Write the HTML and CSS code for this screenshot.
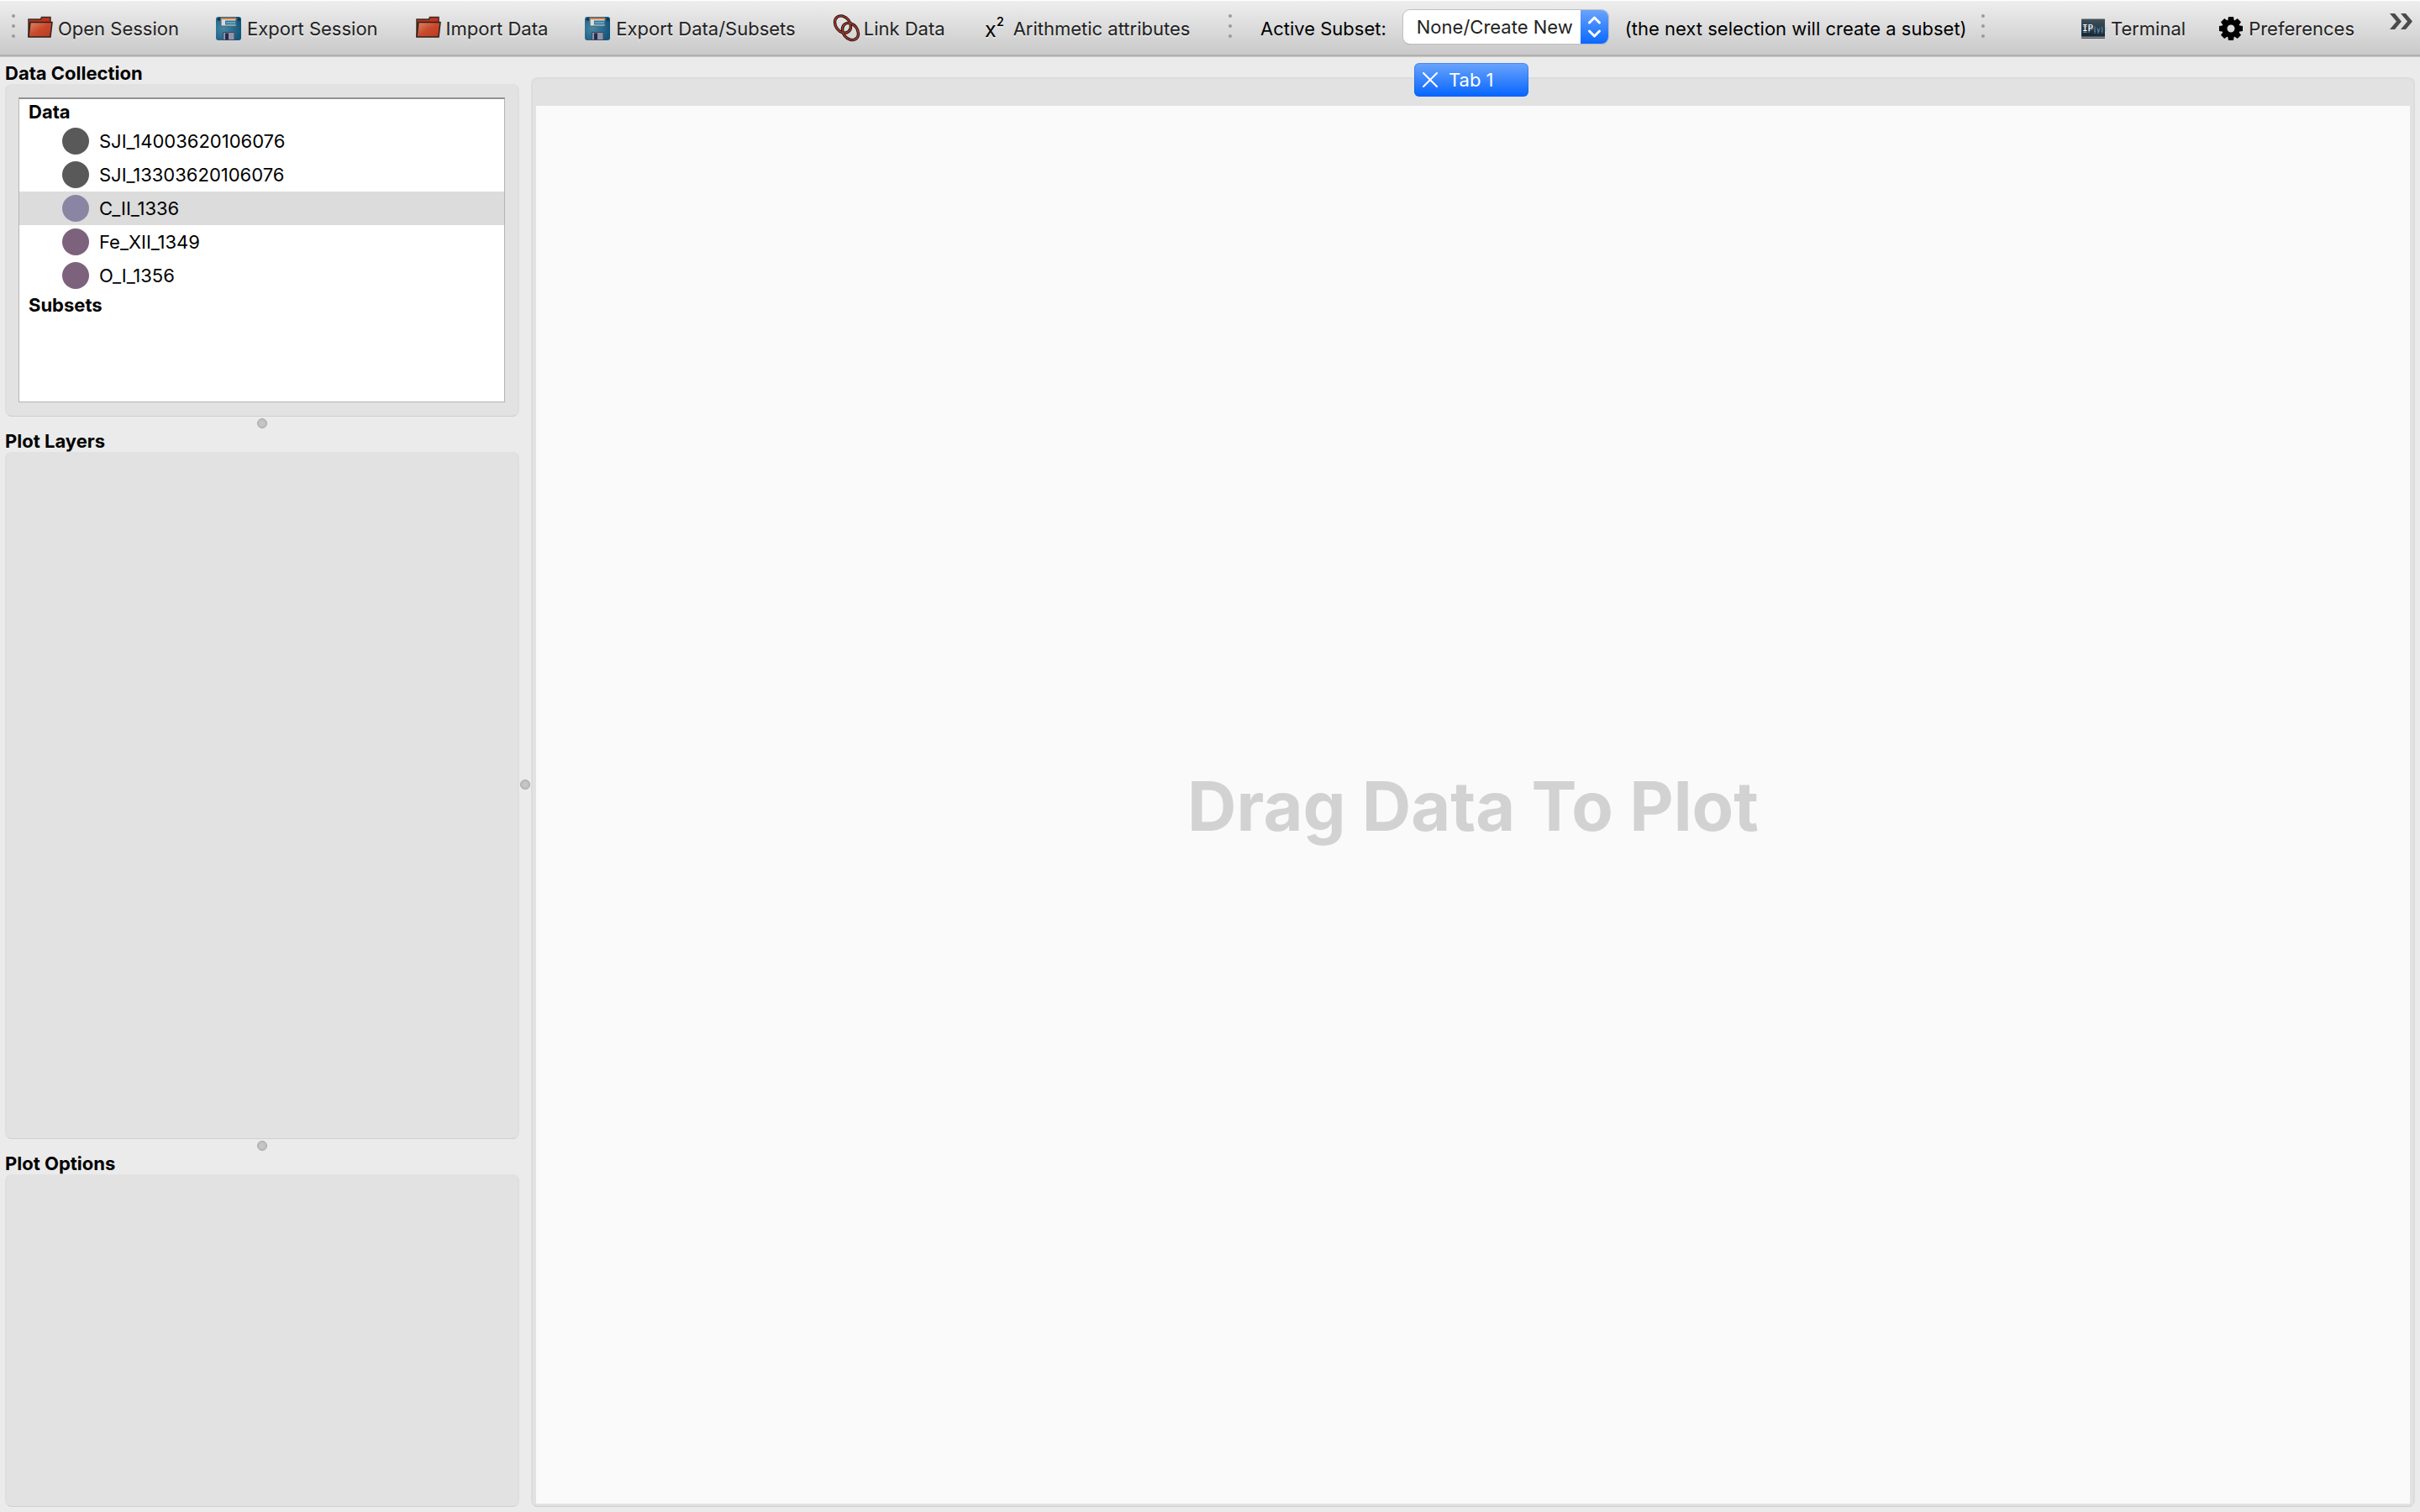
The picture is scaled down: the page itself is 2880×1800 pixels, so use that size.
FILE: index.html
```html
<!DOCTYPE html>
<html lang="en">
<head>
<meta charset="utf-8">
<title>Data Explorer</title>
<link rel="stylesheet" href="styles.css">
</head>
<body>
<svg class="defs" aria-hidden="true">
  <defs>
    <linearGradient id="red" x1="0" y1="0" x2="1" y2="1">
      <stop offset="0" stop-color="#dc8a64"/><stop offset=".5" stop-color="#c9492c"/><stop offset="1" stop-color="#b73a22"/>
    </linearGradient>
    <radialGradient id="blue" cx=".3" cy=".5" r=".7">
      <stop offset="0" stop-color="#4687a3"/><stop offset="1" stop-color="#14577c"/>
    </radialGradient>
    <linearGradient id="screen" x1="0" y1="0" x2="0" y2="1">
      <stop offset="0" stop-color="#43545c"/><stop offset="1" stop-color="#0a2233"/>
    </linearGradient>
    <symbol id="folder" viewBox="0 0 32 32">
      <path d="M2 28V7h14.500l1-2.500h10.500V11" fill="#c0341f" stroke="#3b2a24" stroke-width="1.500"/>
      <path d="M4 10.500h26l-2 17.500H2z" fill="url(#red)" stroke="#2c211d" stroke-width="1.500"/>
    </symbol>
    <symbol id="floppy" viewBox="0 0 32 32">
      <rect x="0" y="4" width="30" height="28" rx="3" fill="url(#blue)"/>
      <path d="M2 5.500h3v3H2zM26 5.500h3v3h-3z" fill="#14324a"/>
      <path d="M6 5h18v10H6z" fill="#d3dbe3" stroke="#54606f"/>
      <path d="M6 5h18v2H6z" fill="#cf7a36"/>
      <path d="M11 8.500h13v5H11z" fill="#2e7697"/>
      <path d="M12 11h11" stroke="#a9cbd8"/>
      <path d="M8.500 22.500h13.500v9H8.500z" fill="#8f95a6" stroke="#3f4864"/>
      <path d="M11 23.500h4v7.500h-4z" fill="#1f2b50"/>
    </symbol>
  </defs>
</svg>

<header class="toolbars">
  <div class="toolbar toolbar-data">
    <span class="handle"><i></i><i></i><i></i></span>
    <button class="tool"><svg class="icon"><use href="#folder"/></svg>Open Session</button>
    <button class="tool"><svg class="icon"><use href="#floppy"/></svg>Export Session</button>
    <button class="tool"><svg class="icon"><use href="#folder"/></svg>Import Data</button>
    <button class="tool"><svg class="icon"><use href="#floppy"/></svg>Export Data/Subsets</button>
    <button class="tool"><svg class="icon" viewBox="0 0 32 32" fill="none">
      <g stroke="#1c1412" stroke-width="3.400"><ellipse cx="12" cy="13" rx="8.500" ry="11" transform="rotate(-38 12 13)"/><ellipse cx="21" cy="21.500" rx="8.500" ry="11" transform="rotate(-38 21 21.500)"/></g>
      <g stroke="#b8392a" stroke-width="1.400"><ellipse cx="12" cy="13" rx="8.500" ry="11" transform="rotate(-38 12 13)"/><ellipse cx="21" cy="21.500" rx="8.500" ry="11" transform="rotate(-38 21 21.500)"/></g>
    </svg>Link Data</button>
    <button class="tool"><svg class="icon" viewBox="0 0 32 32"><text class="glyph-x" x="3" y="28">x</text><text class="glyph-2" x="17" y="15">2</text></svg>Arithmetic attributes</button>
  </div>
  <div class="toolbar toolbar-subset">
    <span class="handle"><i></i><i></i><i></i></span>
    <label class="subset-label" for="subset">Active Subset:</label>
    <span class="combo">
      <select id="subset"><option>None/Create New</option></select>
      <svg class="combo-arrows" viewBox="0 0 33 40" fill="none" stroke="#fff" stroke-width="3" stroke-linecap="round" stroke-linejoin="round"><path d="M10.500 15l6-6 6 6M10.500 25l6 6 6-6"/></svg>
    </span>
    <span class="subset-hint">(the next selection will create a subset)</span>
  </div>
  <div class="toolbar toolbar-app">
    <span class="handle"><i></i><i></i><i></i></span>
    <button class="tool tool-first"><svg class="icon" viewBox="0 0 32 32">
      <path d="M2 6h28v24H2z" fill="url(#screen)"/><path d="M2 6.500h28" stroke="#9a9a9a"/><path d="M2 28.500h28" stroke="#8d8a90" stroke-width="2"/>
      <text class="glyph-ip" x="3" y="21" fill="#fff">IP</text><text class="glyph-y" x="16" y="21" fill="#5a9fcb">[y]:</text>
    </svg>Terminal</button>
    <button class="tool"><svg class="icon" viewBox="0 0 32 32">
      <g fill="#000"><path d="M13 4h6l1 6h-8zM13 32h6l1-6h-8z"/><path d="M13 4h6l1 6h-8zM13 32h6l1-6h-8z" transform="rotate(45 16 18)"/><path d="M13 4h6l1 6h-8zM13 32h6l1-6h-8z" transform="rotate(90 16 18)"/><path d="M13 4h6l1 6h-8zM13 32h6l1-6h-8z" transform="rotate(135 16 18)"/></g>
      <circle cx="16" cy="18" r="7.500" fill="none" stroke="#000" stroke-width="6"/>
    </svg>Preferences</button>
    <button class="more" aria-label="More"><svg viewBox="0 0 28 20" fill="none"><path d="M0 0h6l8 9.500-8 9.500H0l8-9.500zM13 0h6l8 9.500-8 9.500h-6l8-9.500z" fill="#4a4a4a"/></svg></button>
  </div>
</header>

<main class="workspace">
  <aside class="sidebar">
    <h2 class="title">Data Collection</h2>
    <section class="panel panel-data">
      <div class="tree">
        <h3 class="group">Data</h3>
        <ul class="items">
          <li class="item"><i class="dot gray"></i>SJI_14003620106076</li>
          <li class="item"><i class="dot gray"></i>SJI_13303620106076</li>
          <li class="item selected"><i class="dot violet"></i>C_II_1336</li>
          <li class="item"><i class="dot plum"></i>Fe_XII_1349</li>
          <li class="item"><i class="dot plum"></i>O_I_1356</li>
        </ul>
        <h3 class="group">Subsets</h3>
      </div>
    </section>
    <div class="splitter" role="separator"><i class="grip"></i></div>
    <h2 class="title">Plot Layers</h2>
    <section class="panel panel-layers"></section>
    <div class="splitter" role="separator"><i class="grip"></i></div>
    <h2 class="title">Plot Options</h2>
    <section class="panel panel-options"></section>
  </aside>
  <div class="splitter splitter-vertical" role="separator"><i class="grip"></i></div>
  <section class="tabs">
    <div class="tabbar">
      <button class="tab"><svg class="close" viewBox="0 0 18 18" stroke="#fff" stroke-width="2" stroke-linecap="round"><path d="M1 1l16 16M17 1L1 17"/></svg>Tab 1</button>
    </div>
    <div class="frame">
      <div class="canvas"><p class="prompt">Drag Data To Plot</p></div>
    </div>
  </section>
</main>
</body>
</html>
```
FILE: styles.css
```css
* {
  box-sizing: border-box;
}

body {
  margin: 0;
  min-height: 100vh;
  display: flex;
  flex-direction: column;
  background: #ebebeb;
  color: #000;
  font: 22px/30px Inter, "Liberation Sans", sans-serif;
}

button,
select {
  margin: 0;
  padding: 0;
  border: 0;
  background: none;
  color: #232323;
  font: inherit;
}

h2,
h3,
p,
ul {
  margin: 0;
  padding: 0;
  list-style: none;
}

.defs {
  position: absolute;
  width: 0;
  height: 0;
}

/* Toolbars */
.toolbars {
  display: grid;
  grid-template-columns: 1448px 896px 1fr;
  height: 68px;
  border-top: 1px solid #fff;
  border-bottom: 1px solid #c8c8c8;
  background: linear-gradient(#eee, #c8c8c8);
}

.toolbar {
  display: flex;
  align-items: center;
  padding: 2px 0 0 14px;
  border-bottom: 2px solid #b0b0b0;
  white-space: nowrap;
}

.toolbar-data {
  gap: 44px;
}

.toolbar-data .handle {
  margin-right: -30px;
}

.handle {
  display: flex;
  flex-direction: column;
  gap: 8px;
  width: 4px;
  margin-bottom: 6px;
}

.handle i {
  width: 4px;
  height: 4px;
  border-radius: 2px;
  background: #9a9a9a;
}

.tool {
  display: flex;
  align-items: center;
  gap: 5px;
  text-shadow: 0 2px 0 rgba(255, 255, 255, 0.4);
}

.icon {
  width: 32px;
  height: 32px;
  margin-bottom: 4px;
  overflow: visible;
}

.glyph-x {
  font-size: 25px;
  line-height: 25px;
}

.glyph-2 {
  font-size: 14px;
  font-weight: 600;
}

.glyph-ip,
.glyph-y {
  font: 11px "DejaVu Sans Mono", monospace;
}

.glyph-y {
  font-size: 7px;
}

.subset-label {
  margin-left: 34px;
}

.combo {
  display: flex;
  flex: none;
  width: 244px;
  height: 40px;
  margin: 0 20px 4px 20px;
  overflow: hidden;
  border-radius: 8px;
  background: #fff;
  box-shadow: 0 0 0 1px #c0c0c0, 0 1px 1px #999;
}

.combo select {
  flex: 1;
  min-width: 0;
  padding-left: 16px;
  appearance: none;
}

.combo-arrows {
  width: 33px;
  height: 40px;
  background: linear-gradient(#6aa3fb, #0a68ff);
}

.toolbar-app {
  padding-right: 8px;
}

.tool-first {
  margin: 0 38px 0 auto;
}

.more {
  display: flex;
  width: 28px;
  height: 20px;
  margin: 0 0 16px 42px;
}

/* Workspace */
.workspace {
  flex: 1;
  display: grid;
  grid-template-columns: 612px 14px 1fr;
  padding: 4px 6px 6px;
}

.sidebar {
  display: flex;
  flex-direction: column;
}

.title {
  height: 28px;
  font-size: 22px;
  line-height: 30px;
  font-weight: 700;
}

.panel {
  border: 2px solid #dedede;
  border-top-width: 0;
  border-bottom: 1px solid #cfcfcf;
  border-radius: 8px;
  background: #e2e2e2;
}

.panel-data,
.panel-options {
  height: 396px;
}

.panel-data {
  padding: 16px 15px 16px 14px;
}

.panel-layers {
  flex: 1;
}

.tree {
  height: 100%;
  border: 1px solid #b4b4b4;
  border-top: 2px solid #929292;
  background: #fff;
}

.group {
  padding-left: 11px;
  font-size: 22px;
  line-height: 30px;
  font-weight: 700;
}

.item {
  display: flex;
  align-items: center;
  gap: 12px;
  height: 40px;
  padding-left: 51px;
  line-height: 32px;
}

.selected {
  background: #dcdcdc;
}

.dot {
  width: 32px;
  height: 32px;
  border-radius: 50%;
}

.gray {
  background: #595959;
}

.violet {
  background: #8a85a3;
}

.plum {
  background: #7c627c;
}

.splitter {
  display: flex;
  justify-content: center;
  align-items: center;
  height: 12px;
  margin-top: 2px;
}

.splitter-vertical {
  height: auto;
}

.grip {
  width: 12px;
  height: 12px;
  border: 1px solid #a8a8a8;
  border-radius: 50%;
  background: radial-gradient(#cacaca, #b8b8b8);
}

.tabs {
  display: flex;
  flex-direction: column;
  min-width: 0;
  padding-top: 20px;
}

.tabbar {
  display: flex;
  justify-content: center;
  height: 34px;
  padding-right: 4px;
  border: 2px solid #dcdcdc;
  border-bottom: 0;
  border-radius: 8px 8px 0 0;
  background: #e2e2e2;
}

.tab {
  display: flex;
  align-items: center;
  gap: 13px;
  width: 136px;
  height: 40px;
  margin-top: -19px;
  padding-left: 10px;
  border-radius: 6px;
  background: linear-gradient(#6ba4fc, #0565ff);
  box-shadow: inset 0 0 0 1px rgba(0, 80, 220, 0.3);
  color: #fff;
}

.close {
  width: 18px;
  height: 18px;
}

.frame {
  flex: 1;
  display: flex;
  padding: 0 4px 3px;
  border: 2px solid #dcdcdc;
  border-top: 0;
  border-bottom: 1px solid #cfcfcf;
  border-radius: 0 0 8px 8px;
  background: #e2e2e2;
}

.canvas {
  flex: 1;
  display: flex;
  justify-content: center;
  align-items: center;
  padding-top: 4px;
  background: #fafafa;
}

.prompt {
  color: #d2d2d2;
  font-size: 81px;
  line-height: 104px;
  font-weight: 700;
}
```
